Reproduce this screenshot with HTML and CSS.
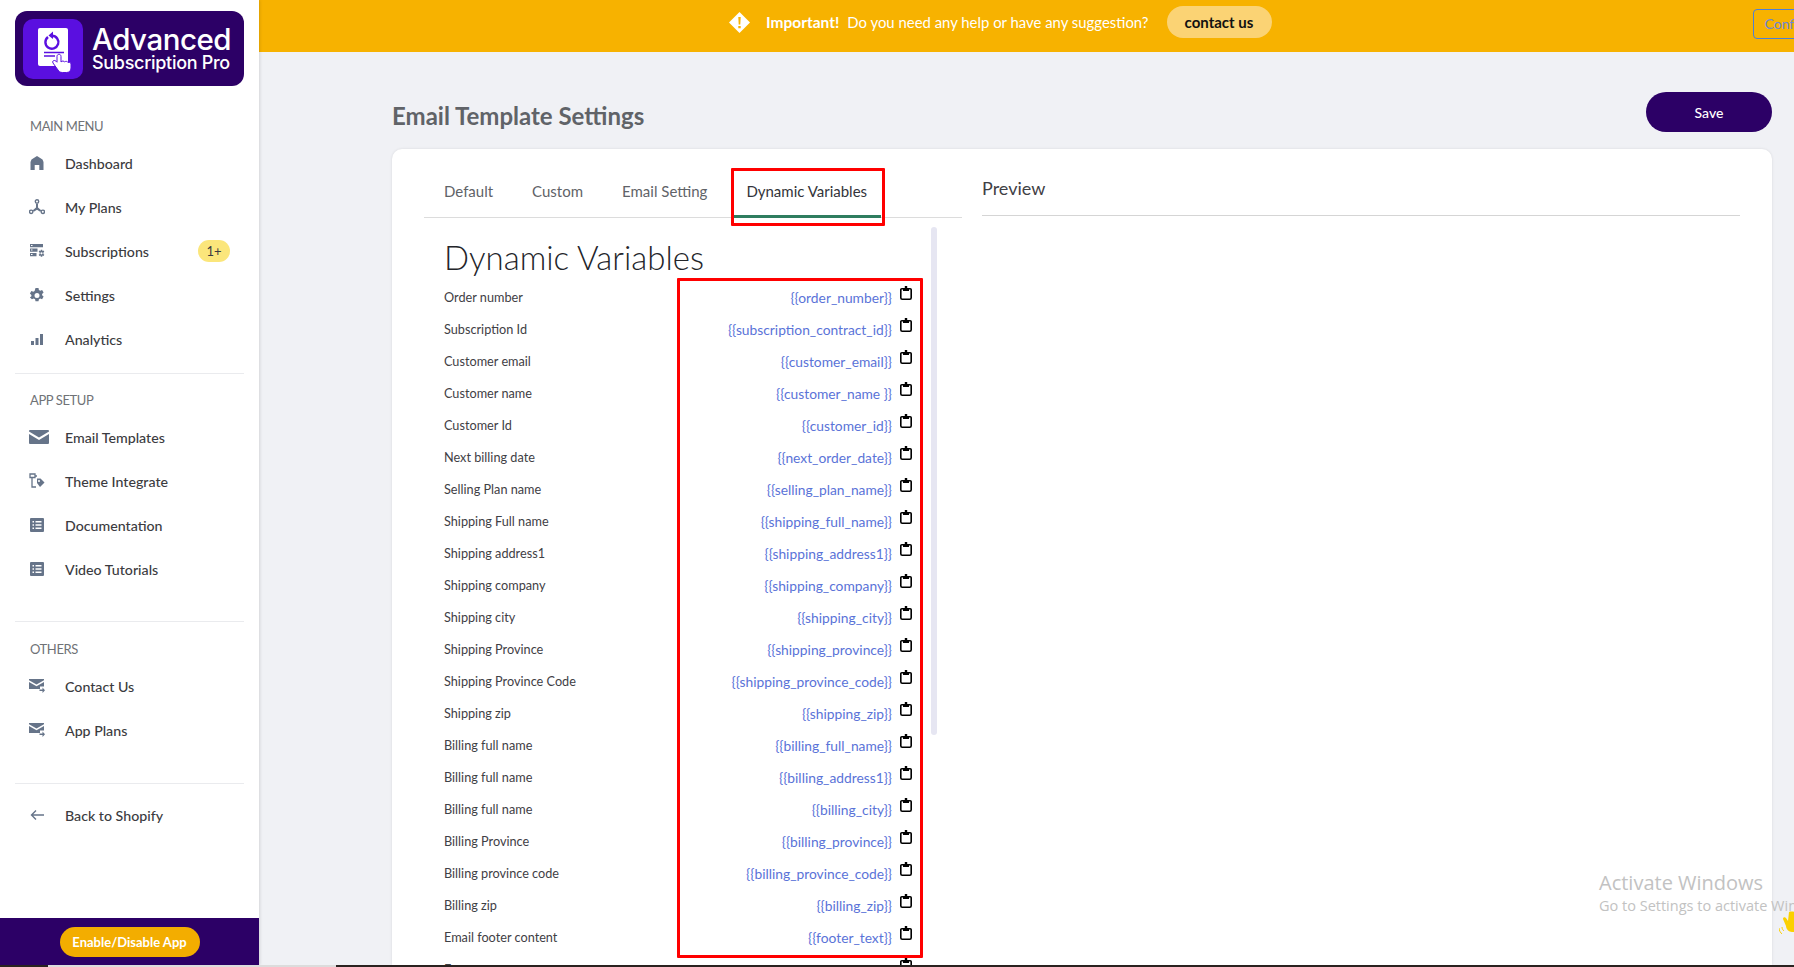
FILE: index.html
```html
<!DOCTYPE html>
<html lang="en">
<head>
    <meta charset="UTF-8">
    <meta name="viewport" content="width=device-width, initial-scale=1.0">
    <title>Email Template Settings</title>
    <link rel="stylesheet" href="styles.css">
</head>
<body>
    <div class="app">
        <!-- Sidebar -->
        <aside class="sidebar">
            <div class="logo">
                <svg class="logo-icon" width="60" height="60" viewBox="0 0 60 60">
                    <rect width="60" height="60" rx="10" fill="#5a0fe0"/>
                    <rect x="15" y="9" width="30" height="38" rx="2" fill="#fff"/>
                    <path d="M25 18a6.500 6.500 0 1 0 4-1.300" fill="none" stroke="#5a0fe0" stroke-width="2.400"/>
                    <path d="M30 12.500l-4.500 4 4.500 3.500z" fill="#5a0fe0"/>
                    <path d="M21 33.500h20M21 37h11" stroke="#5a0fe0" stroke-width="1.600"/>
                    <path d="M34 37.500c0-3 4-3 4 0v5.500c1-1.300 3-1.300 3.500 0 1-1 3-.8 3.500.5 1.200-.6 3-.2 3 1.500v4c0 3-2 4.500-4.500 4.500h-4c-2.500 0-3.500-1-4.500-2.500l-5-7c-1.200-2 1.200-3.500 3-1.800l1 1z" fill="#fff" stroke="#5a0fe0" stroke-width="1"/>
                </svg>
                <div class="logo-text">
                    <div class="logo-big">Advanced</div>
                    <div class="logo-small">Subscription Pro</div>
                </div>
            </div>

            <div class="menu-group first">
                <div class="menu-title">MAIN MENU</div>
                <a class="menu-item">
                    <svg class="menu-icon" viewBox="0 0 16 16"><path d="M8 1 13.500 4.500 14.500 7v8h-4.200V10H5.700v5H1.500V7L2.500 4.500z"/></svg>
                    <span>Dashboard</span>
                </a>
                <a class="menu-item">
                    <svg class="menu-icon" viewBox="0 0 16 16"><circle cx="8" cy="2.500" r="1.700" fill="none" stroke="#667489" stroke-width="1.400"/><circle cx="2.200" cy="12.800" r="1.700" fill="none" stroke="#667489" stroke-width="1.400"/><circle cx="13.800" cy="12.800" r="1.700" fill="none" stroke="#667489" stroke-width="1.400"/><path d="M7 5h2v3.500l3.200 2.800-1 1.400-3.200-1.900-3.200 1.900-1-1.400L7 8.500z"/></svg>
                    <span>My Plans</span>
                </a>
                <a class="menu-item">
                    <svg class="menu-icon" viewBox="0 0 16 16"><path fill-rule="evenodd" d="M1 1h13v3.200H1zM2 2v1h1.500V2zM1 5.500h7.500v3.200H1zM2 6.500v1h1.500v-1zM1 10h6.500v3.200H1zM2 11v1h1.500v-1z"/><path fill-rule="evenodd" d="M11.800 6.800h1.400l.3 1.200 1.100-.4.700 1.200-.9.800v1.300l.9.800-.7 1.200-1.100-.4-.3 1.200h-1.400l-.3-1.200-1.100.4-.7-1.200.9-.8V9.600l-.9-.8.700-1.200 1.100.4zM12.500 9.200a1.100 1.100 0 1 0 0 2.200 1.100 1.100 0 0 0 0-2.200z"/></svg>
                    <span>Subscriptions</span>
                    <span class="badge">1+</span>
                </a>
                <a class="menu-item">
                    <svg class="menu-icon" viewBox="0 0 16 16"><path fill-rule="evenodd" d="M6.500 1h3l.4 2 1.300.7 1.900-.7 1.500 2.600-1.500 1.300v1.400l1.500 1.300-1.500 2.600-1.900-.7-1.300.7-.4 2h-3l-.4-2-1.300-.7-1.900.7L.9 10.600l1.500-1.300V7.900L.9 6.600l1.500-2.600 1.900.7 1.300-.7zM8 6a2.500 2.500 0 1 0 0 5 2.500 2.500 0 0 0 0-5z"/></svg>
                    <span>Settings</span>
                </a>
                <a class="menu-item">
                    <svg class="menu-icon" viewBox="0 0 16 16"><path d="M2 10h3v4H2zM6.500 7h3v7h-3zM11 3h3v11h-3z"/></svg>
                    <span>Analytics</span>
                </a>
            </div>

            <div class="menu-group setup">
                <div class="menu-title">APP SETUP</div>
                <a class="menu-item">
                    <svg class="menu-icon wide" viewBox="0 0 20 14"><path d="M0 1.500 10 7.500 20 1.500V1a1 1 0 0 0-1-1H1a1 1 0 0 0-1 1zM0 4v9a1 1 0 0 0 1 1h18a1 1 0 0 0 1-1V4l-10 6z"/></svg>
                    <span>Email Templates</span>
                </a>
                <a class="menu-item">
                    <svg class="menu-icon" viewBox="0 0 16 16"><path d="M1 1h5v3.500H1z" fill="none" stroke="#667489" stroke-width="1.300"/><path d="M3 5v9h4M6 3h2" fill="none" stroke="#667489" stroke-width="1.300"/><path fill-rule="evenodd" d="M8 5.500h3.500l4 4-4.500 4.500L8 10zM10 7a1 1 0 1 0 0 2 1 1 0 0 0 0-2z"/></svg>
                    <span>Theme Integrate</span>
                </a>
                <a class="menu-item">
                    <svg class="menu-icon" viewBox="0 0 16 16"><path fill-rule="evenodd" d="M2 1h12a1 1 0 0 1 1 1v12a1 1 0 0 1-1 1H2a1 1 0 0 1-1-1V2a1 1 0 0 1 1-1zm1.500 3v1.500H5V4zm3 0v1.500h6V4zm-3 3.300v1.500H5V7.300zm3 0v1.500h6V7.300zm-3 3.200V12H5v-1.500zm3 0V12h6v-1.500z"/></svg>
                    <span>Documentation</span>
                </a>
                <a class="menu-item">
                    <svg class="menu-icon" viewBox="0 0 16 16"><path fill-rule="evenodd" d="M2 1h12a1 1 0 0 1 1 1v12a1 1 0 0 1-1 1H2a1 1 0 0 1-1-1V2a1 1 0 0 1 1-1zm1.500 3v1.500H5V4zm3 0v1.500h6V4zm-3 3.300v1.500H5V7.300zm3 0v1.500h6V7.300zm-3 3.200V12H5v-1.500zm3 0V12h6v-1.500z"/></svg>
                    <span>Video Tutorials</span>
                </a>
            </div>

            <div class="menu-group others">
                <div class="menu-title">OTHERS</div>
                <a class="menu-item">
                    <svg class="menu-icon" viewBox="0 0 16 16"><path d="M0 1h15v1.200L7.500 6.500 0 2.200zM0 4l7.500 4.300L15 4v4.500h-4V11H0z"/><path d="M10.500 11.500h3V9.500l2.500 2.800-2.500 2.700v-2h-3z"/></svg>
                    <span>Contact Us</span>
                </a>
                <a class="menu-item">
                    <svg class="menu-icon" viewBox="0 0 16 16"><path d="M0 1h15v1.200L7.500 6.500 0 2.200zM0 4l7.500 4.300L15 4v4.500h-4V11H0z"/><path d="M10.500 11.500h3V9.500l2.500 2.800-2.500 2.700v-2h-3z"/></svg>
                    <span>App Plans</span>
                </a>
            </div>

            <div class="menu-group back">
                <a class="menu-item">
                    <svg class="menu-icon" viewBox="0 0 16 16"><path d="M15 8H3M7 3.500 2.500 8 7 12.500" fill="none" stroke="#667489" stroke-width="1.400"/></svg>
                    <span>Back to Shopify</span>
                </a>
            </div>

            <div class="sidebar-footer">
                <button class="enable-button">Enable/Disable App</button>
            </div>
        </aside>

        <div class="main">
            <!-- Top banner -->
            <header class="banner">
                <svg class="banner-icon" width="21" height="21" viewBox="0 0 21 21"><path d="M10.500 0 21 10.500 10.500 21 0 10.500z" fill="#fff"/><path d="M9.300 5h2.400l-.4 7.500H9.700zM9.300 14h2.400v2.300H9.300z" fill="#f7b200"/></svg>
                <strong class="banner-strong">Important!</strong>
                <span class="banner-text">Do you need any help or have any suggestion?</span>
                <button class="contact-button">contact us</button>
                <button class="config-button">Configure</button>
            </header>

            <div class="content">
                <div class="page-head">
                    <h1>Email Template Settings</h1>
                    <button class="save-button">Save</button>
                </div>

                <div class="card">
                    <div class="left-col">
                        <ul class="tabs">
                            <li>Default</li>
                            <li>Custom</li>
                            <li>Email Setting</li>
                            <li class="active">Dynamic Variables</li>
                        </ul>
                        <div class="vars-panel">
                            <h2>Dynamic Variables</h2>
                            <div class="var-row"><span>Order number</span><span class="var-code">{{order_number}}</span><svg class="clip"><use href="#clip"/></svg></div>
                            <div class="var-row"><span>Subscription Id</span><span class="var-code">{{subscription_contract_id}}</span><svg class="clip"><use href="#clip"/></svg></div>
                            <div class="var-row"><span>Customer email</span><span class="var-code">{{customer_email}}</span><svg class="clip"><use href="#clip"/></svg></div>
                            <div class="var-row"><span>Customer name</span><span class="var-code">{{customer_name }}</span><svg class="clip"><use href="#clip"/></svg></div>
                            <div class="var-row"><span>Customer Id</span><span class="var-code">{{customer_id}}</span><svg class="clip"><use href="#clip"/></svg></div>
                            <div class="var-row"><span>Next billing date</span><span class="var-code">{{next_order_date}}</span><svg class="clip"><use href="#clip"/></svg></div>
                            <div class="var-row"><span>Selling Plan name</span><span class="var-code">{{selling_plan_name}}</span><svg class="clip"><use href="#clip"/></svg></div>
                            <div class="var-row"><span>Shipping Full name</span><span class="var-code">{{shipping_full_name}}</span><svg class="clip"><use href="#clip"/></svg></div>
                            <div class="var-row"><span>Shipping address1</span><span class="var-code">{{shipping_address1}}</span><svg class="clip"><use href="#clip"/></svg></div>
                            <div class="var-row"><span>Shipping company</span><span class="var-code">{{shipping_company}}</span><svg class="clip"><use href="#clip"/></svg></div>
                            <div class="var-row"><span>Shipping city</span><span class="var-code">{{shipping_city}}</span><svg class="clip"><use href="#clip"/></svg></div>
                            <div class="var-row"><span>Shipping Province</span><span class="var-code">{{shipping_province}}</span><svg class="clip"><use href="#clip"/></svg></div>
                            <div class="var-row"><span>Shipping Province Code</span><span class="var-code">{{shipping_province_code}}</span><svg class="clip"><use href="#clip"/></svg></div>
                            <div class="var-row"><span>Shipping zip</span><span class="var-code">{{shipping_zip}}</span><svg class="clip"><use href="#clip"/></svg></div>
                            <div class="var-row"><span>Billing full name</span><span class="var-code">{{billing_full_name}}</span><svg class="clip"><use href="#clip"/></svg></div>
                            <div class="var-row"><span>Billing full name</span><span class="var-code">{{billing_address1}}</span><svg class="clip"><use href="#clip"/></svg></div>
                            <div class="var-row"><span>Billing full name</span><span class="var-code">{{billing_city}}</span><svg class="clip"><use href="#clip"/></svg></div>
                            <div class="var-row"><span>Billing Province</span><span class="var-code">{{billing_province}}</span><svg class="clip"><use href="#clip"/></svg></div>
                            <div class="var-row"><span>Billing province code</span><span class="var-code">{{billing_province_code}}</span><svg class="clip"><use href="#clip"/></svg></div>
                            <div class="var-row"><span>Billing zip</span><span class="var-code">{{billing_zip}}</span><svg class="clip"><use href="#clip"/></svg></div>
                            <div class="var-row"><span>Email footer content</span><span class="var-code">{{footer_text}}</span><svg class="clip"><use href="#clip"/></svg></div>
                            <div class="var-row"><span>Footer</span><svg class="clip"><use href="#clip"/></svg></div>
                            <div class="scroll-thumb"></div>
                        </div>
                    </div>
                    <div class="right-col">
                        <div class="preview-title">Preview</div>
                    </div>
                </div>
            </div>
        </div>
    </div>

    <!-- Annotation boxes drawn on the screenshot -->
    <div class="mark mark-tab"></div>
    <div class="mark mark-vars"></div>

    <!-- Windows watermark -->
    <div class="watermark">
        <div class="watermark-big">Activate Windows</div>
        <div class="watermark-small">Go to Settings to activate Windows.</div>
    </div>
    <svg class="wave" width="18" height="24" viewBox="0 0 18 24"><path d="M10 1c2-1 8 0 8 0v20h-5c-3 0-6-3-6-6l-3-7c0-2 2-2 3-1l2 3z" fill="#fbd000"/><path d="M3 16c0 2 1 3 2 4M0 17c0 3 2 5 3 6" fill="none" stroke="#fbd000"/></svg>

    <div class="taskbar"></div>

    <svg width="0" height="0" class="defs">
        <symbol id="clip" viewBox="0 0 12 14">
            <path d="M3.500 2.800H1.800a1 1 0 0 0-1 1v8c0 .9.600 1.400 1.400 1.400h7.600c.9 0 1.400-.6 1.400-1.400v-8a1 1 0 0 0-1-1H8.500" fill="none" stroke="#000" stroke-width="1.600"/>
            <path d="M3 5V2h1.800V0h2.400v2H9v3z" fill="#000"/>
        </symbol>
    </svg>
</body>
</html>
```
FILE: styles.css
```css
* {
  box-sizing: border-box;
}

html, body {
  margin: 0;
  height: 967px;
  overflow: hidden;
}

body {
  font-family: "Lato", "Liberation Sans", sans-serif;
  color: #3a3a3f;
  background-color: #f0f1f5;
  position: relative;
}

button {
  font-family: inherit;
  border: none;
  cursor: pointer;
}

.app {
  display: flex;
  height: 965px;
  overflow: hidden;
}

.defs {
  position: absolute;
}

/* Sidebar */
.sidebar {
  width: 259px;
  flex-shrink: 0;
  display: flex;
  flex-direction: column;
  background-color: #fff;
  box-shadow: 1px 0 3px rgba(0,0,0,0.12);
  position: relative;
  z-index: 1;
}

.logo {
  display: flex;
  align-items: center;
  width: 229px;
  height: 75px;
  margin: 11px 0 0 15px;
  padding-left: 8px;
  background-color: #2c0066;
  border-radius: 12px;
}

.logo-icon {
  flex-shrink: 0;
}

.logo-text {
  margin-left: 9px;
  color: #fff;
  font-family: "Inter", sans-serif;
  font-weight: 500;
  white-space: nowrap;
}

.logo-big {
  font-size: 29.500px;
  line-height: 28px;
  letter-spacing: -0.5px;
}

.logo-small {
  font-size: 18px;
  line-height: 20px;
  letter-spacing: -0.3px;
}

.menu-group {
  margin: 0 15px;
  padding-bottom: 12px;
  border-bottom: 1px solid #eaebee;
}

.menu-group.first {
  margin-top: 30px;
}

.menu-group.setup {
  padding-top: 16px;
  padding-bottom: 30px;
}

.menu-group.others {
  padding-top: 17px;
  padding-bottom: 31px;
}

.menu-group.back {
  padding-top: 9px;
  border-bottom: none;
}

.menu-title {
  padding-left: 15px;
  margin-bottom: 5px;
  font-size: 13px;
  line-height: 20px;
  color: #6f7276;
  letter-spacing: -0.4px;
}

.menu-item {
  display: flex;
  align-items: center;
  height: 44px;
  padding-left: 14px;
  font-size: 14.200px;
  font-weight: 500;
  color: #3b3b40;
}

.menu-icon {
  width: 16px;
  height: 16px;
  flex-shrink: 0;
  margin-right: 20px;
  fill: #667489;
}

.menu-icon.wide {
  width: 20px;
  height: 14px;
  margin-right: 16px;
}

.badge {
  margin-left: auto;
  margin-right: 14px;
  width: 32px;
  height: 22px;
  line-height: 22px;
  text-align: center;
  border-radius: 11px;
  background-color: #fbe67b;
  font-size: 13px;
  font-weight: 400;
}

.sidebar-footer {
  margin-top: auto;
  height: 47px;
  display: flex;
  align-items: center;
  justify-content: center;
  background-color: #2c0066;
}

.enable-button {
  width: 140px;
  height: 30px;
  border-radius: 15px;
  background-color: #f3ad00;
  color: #fff;
  font-size: 13px;
  font-weight: 700;
}

/* Main area */
.main {
  flex: 1;
  min-width: 0;
  display: flex;
  flex-direction: column;
  overflow: hidden;
}

.banner {
  height: 52px;
  flex-shrink: 0;
  display: flex;
  align-items: center;
  padding: 0 0 8px 470px;
  background-color: #f7b200;
  color: #fff;
  font-size: 15.500px;
  white-space: nowrap;
  overflow: hidden;
}

.banner > * {
  flex-shrink: 0;
}

.banner-icon {
  margin-right: 16px;
}

.banner-strong {
  margin-right: 8px;
}

.banner-text {
  font-size: 14.900px;
}

.contact-button {
  margin-left: 18px;
  width: 105px;
  height: 32px;
  border-radius: 16px;
  background-color: #fbd374;
  color: #111;
  font-size: 15px;
  font-weight: 700;
}

.config-button {
  margin: 3px 0 0 481px;
  width: 90px;
  height: 30px;
  border: 1px solid #4d7fd6;
  border-radius: 4px;
  background-color: transparent;
  color: #6d86d6;
  font-size: 14px;
  text-align: left;
  padding-left: 11px;
}

.content {
  flex: 1;
  min-height: 0;
  padding: 40px 22px 0 133px;
}

.page-head {
  display: flex;
  justify-content: space-between;
  height: 40px;
  margin-bottom: 17px;
}

.page-head h1 {
  margin: 9px 0 0;
  font-size: 24px;
  line-height: 30px;
  font-weight: 700;
  color: #606368;
}

.save-button {
  width: 126px;
  height: 40px;
  border-radius: 20px;
  background-color: #2c0066;
  color: #fff;
  font-size: 14px;
  font-weight: 500;
}

/* Card */
.card {
  display: flex;
  gap: 20px;
  height: 816px;
  padding: 0 32px;
  background-color: #fff;
  border-radius: 10px 10px 0 0;
  box-shadow: 0 0 3px rgba(0,0,0,0.1);
}

.left-col {
  width: 538px;
  flex-shrink: 0;
}

.right-col {
  flex: 1;
}

.tabs {
  list-style-type: none;
  display: flex;
  height: 69px;
  margin: 0;
  padding: 0 0 0 6px;
  gap: 11px;
  border-bottom: 1px solid #dcdcdc;
}

.tabs li {
  display: flex;
  align-items: flex-end;
  height: 69px;
  padding: 0 14px 18px;
  font-size: 15px;
  color: #5f6368;
}

.tabs li.active {
  color: #33343a;
  border-bottom: 3px solid #2e7d5f;
  padding-bottom: 15px;
}

.vars-panel {
  position: relative;
  padding: 20px 0 0 20px;
}

.vars-panel h2 {
  margin: 0 0 5px;
  height: 38px;
  line-height: 38px;
  font-size: 33px;
  font-weight: 300;
  color: #23252a;
}

.var-row {
  display: flex;
  align-items: center;
  height: 32px;
  width: 468px;
  font-size: 12.700px;
  color: #3f4045;
}

.var-code {
  margin-left: auto;
  font-size: 13.800px;
  color: #5a73d8;
}

.var-row .clip {
  width: 12px;
  height: 14px;
  margin-left: 8px;
  position: relative;
  top: -4px;
}

.var-row span:first-child + .clip {
  margin-left: auto;
}

.scroll-thumb {
  position: absolute;
  top: 9px;
  left: 507px;
  width: 6px;
  height: 508px;
  background-color: #e6e6f2;
  border-radius: 3px;
}

.preview-title {
  height: 67px;
  padding-top: 28px;
  font-size: 18px;
  color: #3f4045;
  border-bottom: 1px solid #d5d5d5;
}

/* Screenshot annotations */
.mark {
  position: absolute;
  border: 3px solid #f00;
  border-radius: 1px;
  z-index: 2;
}

.mark-tab {
  left: 731px;
  top: 168px;
  width: 154px;
  height: 58px;
}

.mark-vars {
  left: 677px;
  top: 278px;
  width: 246px;
  height: 680px;
}

.watermark {
  position: absolute;
  left: 1599px;
  top: 869px;
  white-space: nowrap;
  color: #c2c2c2;
  font-family: "Open Sans", sans-serif;
  z-index: 2;
}

.watermark-big {
  font-size: 20px;
  line-height: 27px;
}

.watermark-small {
  font-size: 14.500px;
  line-height: 20px;
}

.wave {
  position: absolute;
  left: 1779px;
  top: 911px;
  z-index: 2;
}

.taskbar {
  height: 2px;
  background: linear-gradient(to right, #2a2220 48px, #dcdcdc 48px, #dcdcdc 336px, #2a2220 336px);
}
```
